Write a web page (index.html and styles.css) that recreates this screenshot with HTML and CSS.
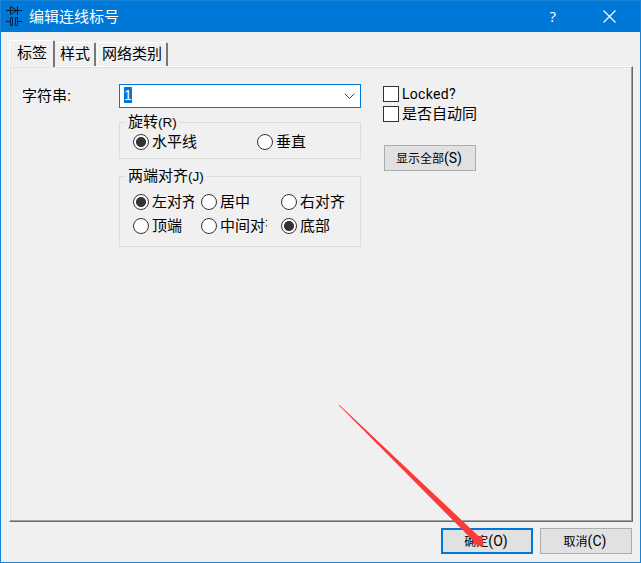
FILE: index.html
```html
<!DOCTYPE html>
<html lang="zh-CN">
<head>
<meta charset="utf-8">
<title>编辑连线标号</title>
<link rel="stylesheet" href="styles.css">
</head>
<body>
<div class="window">
  <header class="titlebar">
    <svg class="app-icon" width="16" height="22" viewBox="0 0 16 22" fill="none" stroke="#0b2035" stroke-width="1">
      <path d="M0 5.5H16M4.5 1.5V9.5L11 5.5ZM11.5 1V10M0 16.5H4M12 16.5H16M4.5 12.5H6.5V20.5H4.5ZM9.5 12.5H11.5V20.5H9.5Z"/>
    </svg>
    <h1 class="title">编辑连线标号</h1>
    <span class="help">?</span>
    <svg class="close" width="13" height="13" viewBox="0 0 13 13" stroke="#fff" stroke-width="1.1"><path d="M.5 .5L12.5 12.5M12.5 .5L.5 12.5"/></svg>
  </header>
  <nav class="tabs">
    <span class="tab active">标签</span>
    <span class="tab">样式</span>
    <span class="tab wide">网络类别</span>
  </nav>
  <main class="panel">
    <label class="caption">字符串:</label>
    <div class="fields">
      <div class="combo">
        <span class="selected">1</span>
        <svg width="11" height="7" viewBox="0 0 11 7" fill="none" stroke="#444" stroke-width="1"><path d="M.8 .8L5.5 5.5L10.2 .8"/></svg>
      </div>
      <section class="group rotation">
        <h2 class="legend">旋转<span class="key">(R)</span></h2>
        <label class="option"><i class="radio on"></i><span>水平线</span></label>
        <label class="option"><i class="radio"></i><span>垂直</span></label>
      </section>
      <section class="group justify">
        <h2 class="legend">两端对齐<span class="key">(J)</span></h2>
        <label class="option"><i class="radio on"></i><span>左对齐</span></label>
        <label class="option"><i class="radio"></i><span>居中</span></label>
        <label class="option"><i class="radio"></i><span>右对齐</span></label>
        <label class="option"><i class="radio"></i><span>顶端</span></label>
        <label class="option"><i class="radio"></i><span>中间对齐</span></label>
        <label class="option"><i class="radio on"></i><span>底部</span></label>
      </section>
    </div>
    <aside class="side">
      <label class="check"><i class="box"></i><span class="latin">Locked?</span></label>
      <label class="check"><i class="box"></i><span>是否自动同</span></label>
      <button class="button show-all">显示全部<span>(S)</span></button>
    </aside>
  </main>
  <footer class="actions">
    <button class="button primary">确定<span>(O)</span></button>
    <button class="button">取消<span>(C)</span></button>
  </footer>
  <svg class="arrow" width="150" height="145" viewBox="0 0 150 145" fill="#fb3b38">
    <path d="M.5 0L1.5 0L141 131.5L144 130.5L145.5 141.5L134 138.5L135.5 136Z"/>
  </svg>
</div>
</body>
</html>
```

FILE: styles.css
```css
* { box-sizing: border-box; }

body {
  margin: 0;
  font: 15px/18px "Liberation Sans", "Noto Sans CJK SC", sans-serif;
  color: #000;
}

.window {
  position: relative;
  display: flex;
  flex-direction: column;
  width: 641px;
  height: 563px;
  background: #f0f0f0;
  border: 1px solid #1883d7;
  border-top: 0;
  overflow: hidden;
}

.titlebar {
  display: flex;
  align-items: center;
  flex: none;
  height: 32px;
  padding: 0 24px 0 5px;
  background: #0078d7;
  border-top: 1px solid #1883d7;
  color: #fff;
}

.app-icon { margin-top: -1px; }

.title {
  flex: 1;
  margin: 0 0 0 7px;
  font-size: 15px;
  font-weight: 400;
}

.help { font: 15px/18px "Open Sans", sans-serif; margin: -2px 47px 0 0; }

.tabs {
  display: flex;
  align-items: flex-end;
  height: 35px;
  padding-left: 8px;
  z-index: 1;
}

.tab {
  width: 41px;
  height: 24px;
  margin-bottom: 1px;
  padding: 2px 0 0 5px;
  border-top: 1px solid #fff;
  border-right: 2px solid #777;
  border-radius: 2px 2px 0 0;
  white-space: nowrap;
}

.tab.active {
  width: 46px;
  height: 27px;
  margin-bottom: 0;
  padding: 3px 0 0 7px;
  border-left: 1px solid #fff;
  background: #f0f0f0;
}

.tab.wide {
  width: 71px;
  margin-left: 1px;
  padding-left: 4px;
  border-left: 1px solid #fff;
}

.panel {
  display: grid;
  grid-template-columns: 97px 242px 94px;
  align-content: start;
  flex: none;
  width: 624px;
  height: 456px;
  margin: -1px 0 0 8px;
  padding: 17px 0 0 12px;
  border: 1px solid #fff;
  border-right: 1px solid #696969;
  border-bottom: 1px solid #696969;
  box-shadow: inset -1px -1px #a0a0a0, inset 1px 1px #e3e3e3;
}

.caption { padding-top: 3px; }

.combo {
  display: flex;
  align-items: center;
  justify-content: space-between;
  height: 24px;
  padding: 0 5px 0 4px;
  background: #fff;
  border: 1px solid #0078d7;
}

.selected {
  width: 8px;
  height: 16px;
  margin-top: -2px;
  background: #0078d7;
  color: #fff;
  font-size: 14px;
  line-height: 16px;
}

.group {
  display: grid;
  border: 1px solid #dcdcdc;
  padding-left: 13px;
}

.legend {
  grid-column: 1 / -1;
  justify-self: start;
  height: 18px;
  margin: -10px 0 0 -7px;
  padding: 0 2px;
  background: #f0f0f0;
  font-size: 15px;
  font-weight: 400;
}

.key { font-size: 13.5px; }

.rotation {
  grid-template-columns: 124px 90px;
  grid-template-rows: 7px 24px;
  height: 37px;
  margin-top: 14px;
}

.justify {
  grid-template-columns: 68px 80px 72px;
  grid-template-rows: 13px 24px 24px;
  height: 71px;
  margin-top: 17px;
}

.option {
  display: flex;
  align-items: center;
  gap: 3px;
  height: 24px;
}

.option span {
  max-width: 47px;
  overflow: hidden;
  white-space: nowrap;
}

.justify .option:nth-of-type(1) span { max-width: 42px; }

.radio {
  flex: none;
  width: 16px;
  height: 16px;
  border: 1px solid #333;
  border-radius: 50%;
  background: #fff;
}

.radio.on { background: radial-gradient(circle, #333 4.6px, #fff 5.4px); }

.side { padding-left: 22px; }

.check {
  display: flex;
  align-items: center;
  gap: 3px;
  height: 20px;
  white-space: nowrap;
}

.box {
  flex: none;
  width: 16px;
  height: 16px;
  border: 1px solid #333;
  background: #fff;
}

.latin { font: 14px/18px Roboto, sans-serif; letter-spacing: .3px; }

.button {
  display: block;
  width: 92px;
  height: 26px;
  padding: 1px 2px 0 0;
  border: 1px solid #adadad;
  background: #e1e1e1;
  color: #000;
  font: 12px/18px "Liberation Sans", "Noto Sans CJK SC", sans-serif;
}

.button span { font: 14px/18px Roboto, sans-serif; }

.show-all { margin: 21px 0 0 1px; }

.primary { border: 2px solid #0078d7; }

.actions {
  display: flex;
  justify-content: flex-end;
  gap: 7px;
  padding: 6px 8px 0 0;
}

.arrow {
  position: absolute;
  left: 337px;
  top: 405px;
  pointer-events: none;
}
```
